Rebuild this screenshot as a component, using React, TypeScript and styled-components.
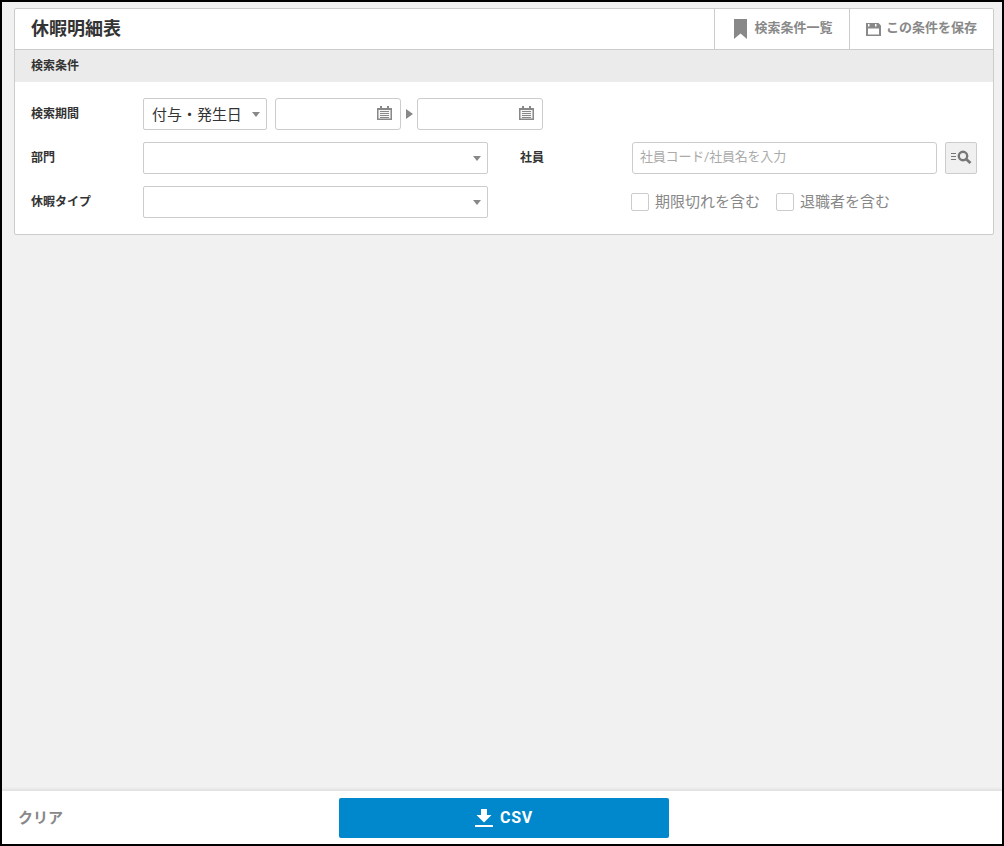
import React from "react";
import styled, { createGlobalStyle } from "styled-components";

const Global = createGlobalStyle`
  html, body { margin: 0; padding: 0; }
  body { font-family: Roboto, "Noto Sans CJK JP", sans-serif; color: #333; }
  * { box-sizing: border-box; }
`;

const Frame = styled.div`
  width: 1004px;
  height: 846px;
  border: 2px solid #000;
  background: #f1f1f1;
  display: flex;
  flex-direction: column;
`;
const Content = styled.main`
  flex: 1;
  padding: 6px 8px 0 12px;
`;
const Panel = styled.section`
  width: 980px;
  height: 227px;
  background: #fff;
  border: 1px solid #ccc;
  border-radius: 2px;
`;
const Header = styled.header`
  height: 41px;
  display: flex;
  align-items: stretch;
  border-bottom: 1px solid #ccc;
`;
const Title = styled.h1`
  flex: 1;
  margin: 0;
  padding-left: 16px;
  font-size: 18px;
  font-weight: 700;
  line-height: 40px;
  color: #333;
`;
const HeaderAction = styled.button<{ $width: number; $gap: number; $inset: number }>`
  width: ${(p) => p.$width}px;
  border: 0;
  border-left: 1px solid #ccc;
  background: #fff;
  display: flex;
  align-items: center;
  justify-content: center;
  gap: ${(p) => p.$gap}px;
  padding: 0 0 0 ${(p) => p.$inset}px;
  font-family: inherit;
  font-size: 13px;
  font-weight: 700;
  color: #888;
`;
const HeaderActionText = styled.span`
  line-height: 16px;
  padding-bottom: 3px;
`;
const SectionBar = styled.div`
  height: 32px;
  background: #ebebeb;
  padding-left: 16px;
  font-size: 12px;
  font-weight: 700;
  line-height: 32px;
  color: #333;
`;
const Form = styled.div`
  padding: 16px 16px 0;
  display: flex;
  flex-direction: column;
  gap: 12px;
`;
const Row = styled.div`
  display: flex;
  align-items: center;
  height: 32px;
`;
const Label = styled.label<{ $width: number }>`
  width: ${(p) => p.$width}px;
  flex: none;
  padding-bottom: 3px;
  font-size: 12px;
  font-weight: 700;
  color: #333;
`;
const Select = styled.div<{ $width: number }>`
  width: ${(p) => p.$width}px;
  height: 32px;
  flex: none;
  background: #fff;
  border: 1px solid #ccc;
  border-radius: 2px;
  display: flex;
  align-items: center;
  justify-content: space-between;
  padding: 0 6px 0 8px;
  font-size: 15px;
  color: #333;
`;
const SelectValue = styled.span`
  padding-bottom: 2px;
  letter-spacing: -0.03px;
`;
const Caret = styled.span`
  width: 0;
  height: 0;
  border-left: 4px solid transparent;
  border-right: 4px solid transparent;
  border-top: 5px solid #888;
  margin-top: 1px;
`;
const DateBox = styled.div`
  width: 126px;
  height: 32px;
  flex: none;
  background: #fff;
  border: 1px solid #ccc;
  border-radius: 3px;
  display: flex;
  align-items: center;
  justify-content: flex-end;
  padding: 0 8px 2px 0;
  color: #888;
`;
const DateGroup = styled.div`
  display: flex;
  align-items: center;
  margin-left: 8px;
`;
const RangeArrow = styled.span`
  width: 0;
  height: 0;
  margin: 0 4px 0 5px;
  border-top: 5px solid transparent;
  border-bottom: 5px solid transparent;
  border-left: 7px solid #888;
`;
const Spacer = styled.div<{ $width: number }>`
  width: ${(p) => p.$width}px;
  flex: none;
`;
const TextInput = styled.input`
  width: 305px;
  height: 32px;
  flex: none;
  border: 1px solid #ccc;
  border-radius: 3px;
  padding: 0 7px 3px;
  font-family: inherit;
  font-size: 13px;
  letter-spacing: -0.2px;
  color: #333;
  &::placeholder { color: #aaa; opacity: 1; }
`;
const SearchButton = styled.button`
  width: 32px;
  height: 32px;
  flex: none;
  margin-left: 8px;
  padding: 0 0 2px;
  border: 1px solid #ccc;
  border-radius: 2px;
  background: #f0f0f0;
  color: #777;
  display: flex;
  align-items: center;
  justify-content: center;
`;
const CheckLabel = styled.label`
  display: flex;
  align-items: center;
  gap: 6px;
  margin-right: 16px;
  font-size: 15px;
  color: #888;
`;
const CheckText = styled.span`
  padding-bottom: 3px;
`;
const CheckBox = styled.span`
  width: 18px;
  height: 18px;
  background: #fff;
  border: 1px solid #ccc;
  border-radius: 2px;
`;
const Footer = styled.footer`
  height: 54px;
  flex: none;
  background: #fff;
  border-top: 1px solid #e2e2e2;
  box-shadow: 0 -1px 3px rgba(0, 0, 0, 0.07);
  display: flex;
  align-items: center;
  padding: 0 0 0 16px;
`;
const ClearLink = styled.button`
  width: 321px;
  flex: none;
  padding: 0 0 2px;
  border: 0;
  background: none;
  text-align: left;
  font-family: inherit;
  font-size: 15px;
  font-weight: 700;
  color: #888;
`;
const CsvButton = styled.button`
  width: 330px;
  height: 40px;
  border: 0;
  border-radius: 2px;
  background: #0087cc;
  color: #fff;
  display: flex;
  align-items: center;
  justify-content: center;
  gap: 7px;
  font-family: inherit;
  font-size: 16px;
  font-weight: 700;
  letter-spacing: 0.8px;
`;

const Bookmark = () => (
  <svg width="13" height="20" viewBox="0 0 13 20" fill="#888"><path d="M0 0h13v20l-6.500-5.500L0 20z" /></svg>
);
const Save = () => (
  <svg width="15" height="13" viewBox="0 0 15 13">
    <path fill="#888" d="M0 0h12.500L15 2.500V13H0z" />
    <path fill="#fff" d="M2 5.500h11v6H2zM2 1h1.500v2.500H2zM9 1h1.500v2.500H9z" />
  </svg>
);
const Calendar = () => (
  <svg width="15" height="14" viewBox="0 0 15 14">
    <path fill="#888" d="M3 0h2v2h5V0h2v2h3v12H0V2h3z" />
    <path fill="#f6f6f6" d="M1.500 4h12v8.500h-12z" />
    <path stroke="#888" d="M3 5.500h9M3 7.500h9M3 9.500h9M3 11.500h9" />
  </svg>
);
const ListSearch = () => (
  <svg width="21" height="14" viewBox="0 0 21 14" fill="none" stroke="currentColor">
    <path strokeWidth="1" d="M0 3.500h5M0 6.500h5M0 9.500h5" />
    <circle cx="12" cy="6" r="4.200" strokeWidth="2.400" />
    <path strokeWidth="2.800" d="M15 9l4.500 4" />
  </svg>
);
const Download = () => (
  <svg width="18" height="18" viewBox="0 0 18 18" fill="#fff">
    <path d="M6 0h6v6h4.500L9 13.500 1.500 6H6zM0 16h18v2H0z" />
  </svg>
);

export default function App() {
  return (
    <Frame>
      <Global />
      <Content>
        <Panel>
          <Header>
            <Title>休暇明細表</Title>
            <HeaderAction $width={135} $gap={7} $inset={3}><Bookmark /><HeaderActionText>検索条件一覧</HeaderActionText></HeaderAction>
            <HeaderAction $width={144} $gap={5} $inset={0}><Save /><HeaderActionText>この条件を保存</HeaderActionText></HeaderAction>
          </Header>
          <SectionBar>検索条件</SectionBar>
          <Form>
            <Row>
              <Label $width={112}>検索期間</Label>
              <Select $width={124}><SelectValue>付与・発生日</SelectValue><Caret /></Select>
              <DateGroup>
                <DateBox><Calendar /></DateBox>
                <RangeArrow />
                <DateBox><Calendar /></DateBox>
              </DateGroup>
            </Row>
            <Row>
              <Label $width={112}>部門</Label>
              <Select $width={345}><span /><Caret /></Select>
              <Spacer $width={32} />
              <Label $width={112}>社員</Label>
              <TextInput placeholder="社員コード/社員名を入力" />
              <SearchButton><ListSearch /></SearchButton>
            </Row>
            <Row>
              <Label $width={112}>休暇タイプ</Label>
              <Select $width={345}><span /><Caret /></Select>
              <Spacer $width={143} />
              <CheckLabel><CheckBox /><CheckText>期限切れを含む</CheckText></CheckLabel>
              <CheckLabel><CheckBox /><CheckText>退職者を含む</CheckText></CheckLabel>
            </Row>
          </Form>
        </Panel>
      </Content>
      <Footer>
        <ClearLink>クリア</ClearLink>
        <CsvButton><Download />CSV</CsvButton>
      </Footer>
    </Frame>
  );
}
